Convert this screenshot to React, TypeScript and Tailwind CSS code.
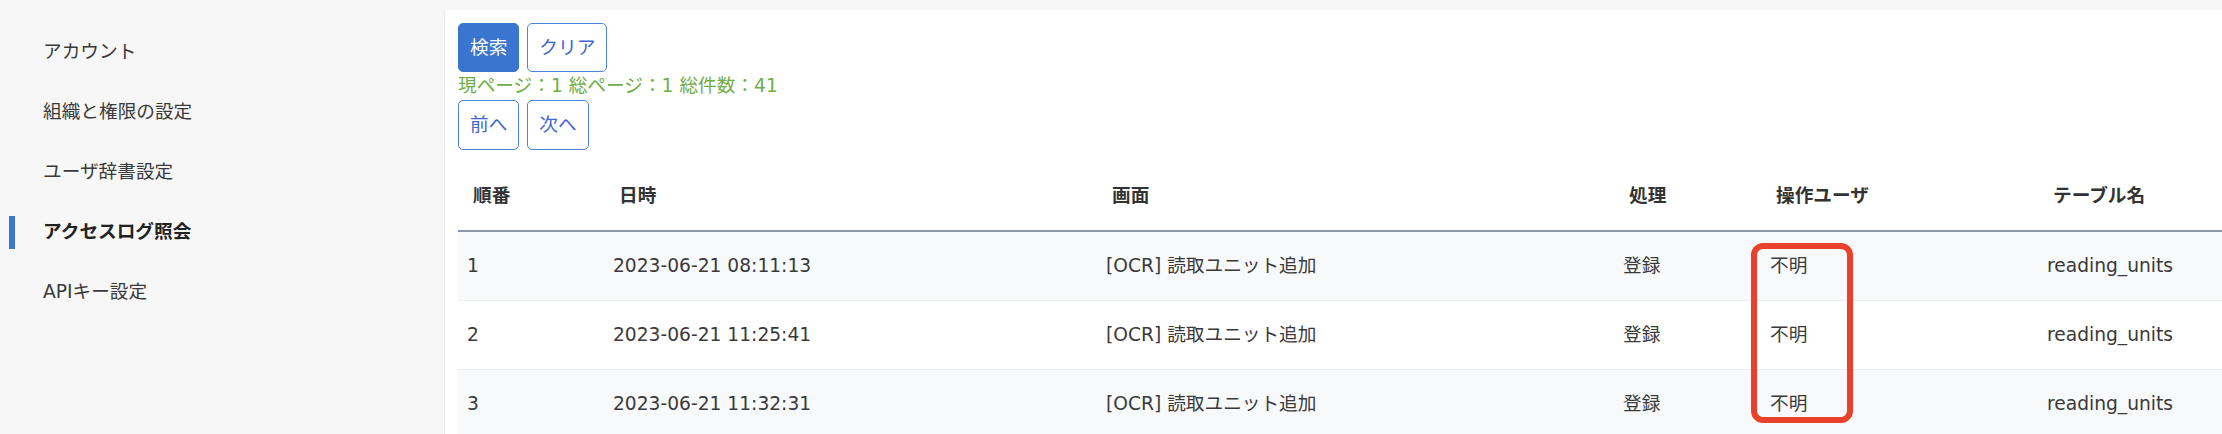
import React from 'react';

const menuItems = [
  { label: 'アカウント', active: false },
  { label: '組織と権限の設定', active: false },
  { label: 'ユーザ辞書設定', active: false },
  { label: 'アクセスログ照会', active: true },
  { label: 'APIキー設定', active: false },
];

const logs = [
  { no: 1, at: '2023-06-21 08:11:13', screen: '[OCR] 読取ユニット追加', action: '登録', user: '不明', table: 'reading_units' },
  { no: 2, at: '2023-06-21 11:25:41', screen: '[OCR] 読取ユニット追加', action: '登録', user: '不明', table: 'reading_units' },
  { no: 3, at: '2023-06-21 11:32:31', screen: '[OCR] 読取ユニット追加', action: '登録', user: '不明', table: 'reading_units' },
];

const columns = [
  { label: '順番', width: 'w-[146px]' },
  { label: '日時', width: 'w-[493px]' },
  { label: '画面', width: 'w-[517px]' },
  { label: '処理', width: 'w-[147px]' },
  { label: '操作ユーザ', width: 'w-[277px]' },
  { label: 'テーブル名', width: 'w-[400px]' },
];

export default function App() {
  return (
    <div className="flex h-[434px] w-[2222px] overflow-hidden bg-[#f7f7f7] text-[18.67px] text-[#3a3a3a] font-['DejaVu_Sans','Noto_Sans_CJK_JP',sans-serif]">
      {/* Sidebar */}
      <nav className="w-[444px] shrink-0 pt-[22px]">
        {menuItems.map((item) => (
          <div key={item.label} className="flex h-[60px] items-center pl-[9px]">
            <span className={`h-[33px] w-[6px] ${item.active ? 'bg-[#3b76cf]' : 'bg-transparent'}`} />
            <span className={`ml-[28px] ${item.active ? 'font-bold text-[#222]' : ''}`}>{item.label}</span>
          </div>
        ))}
      </nav>

      {/* Main */}
      <main className="relative mt-[10px] min-w-0 flex-1 overflow-hidden border-l border-[#ececec] bg-white pl-[13px] pt-[13px]">
        <div className="flex gap-[8px]">
          <button className="h-[49px] rounded-[5px] border-[1.5px] border-[#3a75cf] bg-[#3a75cf] px-[11px] text-white">検索</button>
          <button className="h-[49px] rounded-[5px] border-[1.5px] border-[#4a84dc] bg-white px-[11px] text-[#4066cf]">クリア</button>
        </div>
        <div className="h-[28px] leading-[28px] text-[#70ad47]">現ページ：1 総ページ：1 総件数：41</div>
        <div className="flex gap-[8px]">
          <button className="h-[50px] rounded-[5px] border-[1.5px] border-[#4a84dc] bg-white px-[11px] text-[#4066cf]">前へ</button>
          <button className="h-[50px] rounded-[5px] border-[1.5px] border-[#4a84dc] bg-white px-[11px] text-[#4066cf]">次へ</button>
        </div>

        <table className="mt-[12px] w-[1980px] min-w-[1980px] table-fixed border-collapse text-left">
          <thead>
            <tr className="h-[69px] border-b-2 border-[#8e97a6]">
              {columns.map((c) => (
                <th key={c.label} className={`${c.width} pl-[15px] font-bold text-[#333]`}>{c.label}</th>
              ))}
            </tr>
          </thead>
          <tbody>
            {logs.map((log, i) => (
              <tr key={log.no} className={`h-[69px] border-t border-[#eceef2] ${i % 2 === 0 ? 'bg-[#f8f9fb]' : 'bg-white'}`}>
                <td className="pl-[9px]">{log.no}</td>
                <td className="pl-[9px]">{log.at}</td>
                <td className="pl-[9px]">{log.screen}</td>
                <td className="pl-[9px]">{log.action}</td>
                <td className="pl-[9px]">{log.user}</td>
                <td className="pl-[9px]">{log.table}</td>
              </tr>
            ))}
          </tbody>
        </table>

        {/* annotation box */}
        <div className="absolute left-[1306px] top-[233px] h-[180px] w-[102px] rounded-[12px] border-[6px] border-[#e8412c]" />
      </main>
    </div>
  );
}
